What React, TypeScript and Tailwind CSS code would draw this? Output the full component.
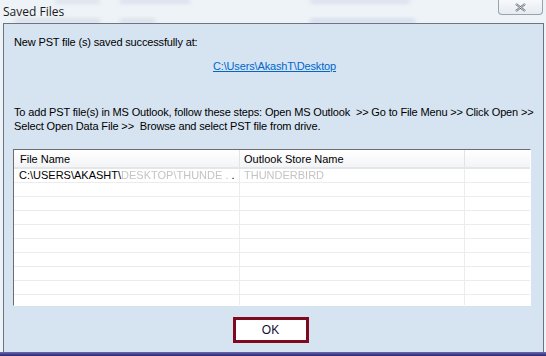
import React from 'react';

const rows = Array.from({ length: 10 });

export default function App() {
    return (
        <div className="relative w-[546px] h-[356px] overflow-hidden bg-[#eef3f8] font-['Liberation_Sans',Arial,sans-serif] text-[11px] text-black">
            {/* glass behind the title bar */}
            <div className="absolute inset-x-0 top-0 h-[24px] blur-[2px] opacity-30">
                <div className="absolute left-[55px] top-0 w-[45px] h-[3px] bg-[#9aa4b8]" />
                <div className="absolute left-[120px] top-0 w-[70px] h-[3px] bg-[#8a96c0]" />
                <div className="absolute left-[310px] top-0 w-[100px] h-[3px] bg-[#8a96c0]" />
                <div className="absolute left-[15px] top-[19px] w-[85px] h-[4px] bg-[#9aa4b8]" />
                <div className="absolute left-[120px] top-[19px] w-[35px] h-[4px] bg-[#9aa4b8]" />
                <div className="absolute left-[310px] top-[19px] w-[105px] h-[4px] bg-[#8a96c0]" />
            </div>

            {/* Title bar */}
            <div className="relative flex h-[23px] items-center pl-[3px]">
                <span className="text-[12px] text-[#1a1a1a] font-['Open_Sans',sans-serif] leading-none">Saved Files</span>
                <button className="absolute right-[3px] top-0 flex h-[15px] w-[45px] items-center justify-center rounded-b-[4px] border border-t-0 border-[#9aa3ad] bg-gradient-to-b from-[#f7f9fb] to-[#e6ebf1]">
                    <svg width="11" height="9" viewBox="0 0 11 9">
                        <path d="M1 1 L10 8 M10 1 L1 8" stroke="#5c6470" strokeWidth="2.2" fill="none" />
                        <path d="M1 1 L10 8 M10 1 L1 8" stroke="#f4f6f8" strokeWidth="0.8" fill="none" />
                    </svg>
                </button>
            </div>

            {/* Client area */}
            <div className="relative ml-[3px] mr-[2px] h-[330px] border border-[#6b7480] border-b-0 bg-[#d6e4f2] pl-[10px] pr-[10px] tracking-[-0.15px]">
                <div className="mt-[11px] whitespace-nowrap leading-[14px]">New PST file (s) saved successfully at:</div>
                <div className="mt-[10px] flex justify-center pl-[2px] leading-[14px]">
                    <a href="#" className="text-[#0066cc] underline">C:\Users\AkashT\Desktop</a>
                </div>
                <div className="mt-[32px] whitespace-nowrap leading-[14px]">
                    <div>To add PST file(s) in MS Outlook, follow these steps: Open MS Outlook &nbsp;&gt;&gt; Go to File Menu &gt;&gt; Click Open &gt;&gt;</div>
                    <div>Select Open Data File &gt;&gt; &nbsp;Browse and select PST file from drive.</div>
                </div>

                {/* List view */}
                <div className="mt-[16px] -ml-[1px] h-[157px] w-[518px] overflow-hidden border border-t-[#6d6d6d] border-l-[#6d6d6d] border-r-white border-b-white bg-white tracking-normal">
                    <div className="flex h-[19px] border-b-2 border-[#e4e6ea] bg-gradient-to-b from-white to-[#f3f4f6] leading-[19px]">
                        <div className="w-[226px] border-r border-[#e3e3e3] pl-[6px]">File Name</div>
                        <div className="w-[225px] border-r border-[#e3e3e3] pl-[4px]">Outlook Store Name</div>
                        <div className="flex-1" />
                    </div>
                    {rows.map((_, i) => (
                        <div key={i} className="flex h-[14px] border-b border-[#ececec] leading-[13px]">
                            <div className="flex w-[226px] whitespace-nowrap border-r border-[#ececec] pl-[5px]">
                                {i === 0 && (
                                    <>
                                        <span>C:\USERS\AKASHT\</span>
                                        <span className="text-[#c4c4c4] blur-[0.6px]">DESKTOP\THUNDE .</span>
                                        <span className="ml-[3px]">.</span>
                                    </>
                                )}
                            </div>
                            <div className="w-[225px] border-r border-[#ececec] pl-[4px]">
                                {i === 0 && <span className="text-[#c4c4c4] blur-[0.6px]">THUNDERBIRD</span>}
                            </div>
                            <div className="flex-1" />
                        </div>
                    ))}
                </div>

                <div className="mt-[11px] flex justify-center">
                    <button className="mr-[6px] h-[26px] w-[76px] border-[3px] border-[#7d0a1e] bg-white text-[12px] leading-none tracking-normal text-[#101030]">
                        OK
                    </button>
                </div>
            </div>

            {/* Bottom frame */}
            <div className="absolute inset-x-0 bottom-0 h-[4px] bg-gradient-to-b from-[#6e6aa8] to-[#2c2378]" />
        </div>
    );
}
